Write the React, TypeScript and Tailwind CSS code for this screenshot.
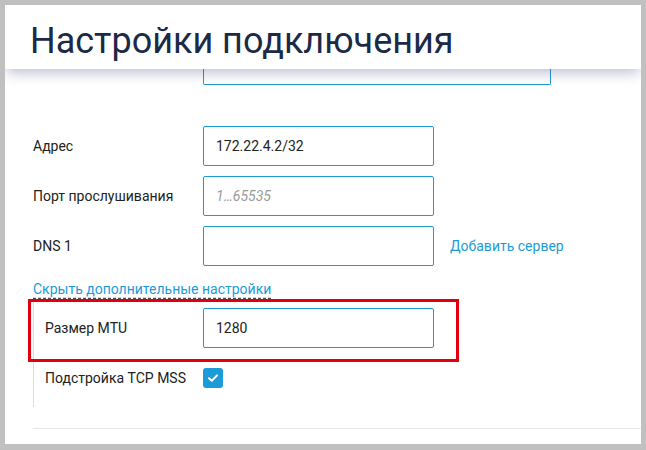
import type { ReactNode } from "react";

function Field({
  value,
  placeholder,
}: {
  value?: string;
  placeholder?: string;
}) {
  return (
    <div className="w-[231px] h-[40px] border border-[#1e9bcf] rounded-[2px] flex items-center pl-[12px] text-[14px]">
      {value ? (
        <span className="text-[#222222]">{value}</span>
      ) : (
        <span className="italic text-[#9a9a9a]">{placeholder}</span>
      )}
    </div>
  );
}

function Row({
  label,
  labelWidth,
  children,
}: {
  label: string;
  labelWidth: string;
  children: ReactNode;
}) {
  return (
    <div className="h-[40px] flex items-center">
      <div className={`${labelWidth} text-[14px] text-[#222222]`}>{label}</div>
      {children}
    </div>
  );
}

function CheckBox() {
  return (
    <div className="w-[20px] h-[20px] rounded-[3px] bg-[#1b9bd8] flex items-center justify-center">
      <svg width="14" height="14" viewBox="0 0 14 14" fill="none">
        <polyline
          points="3,7.2 5.8,9.8 11,4.4"
          stroke="white"
          strokeWidth="2"
          strokeLinecap="round"
          strokeLinejoin="round"
        />
      </svg>
    </div>
  );
}

export default function App() {
  return (
    <div className="w-[646px] h-[450px] bg-[#c0c0c0] pt-[5px] pl-[5px] pr-[5px] pb-[6px] font-['Roboto',sans-serif]">
      <div className="h-full bg-white flex flex-col overflow-hidden">
        <header className="relative z-10 h-[64px] shrink-0 bg-white pl-[25px] pt-[18px] shadow-[0_6px_12px_-2px_rgba(50,60,120,0.32)]">
          <h1 className="text-[36px] leading-none text-[#1b2a47]">
            Настройки подключения
          </h1>
        </header>

        <div className="flex-1 pl-[28px]">
          <div className="ml-[170px] w-[348px] h-[16px] border border-t-0 border-[#1e9bcf] rounded-b-[2px]" />

          <div className="mt-[41px] flex flex-col gap-[10px]">
            <Row label="Адрес" labelWidth="w-[170px]">
              <Field value="172.22.4.2/32" />
            </Row>
            <Row label="Порт прослушивания" labelWidth="w-[170px]">
              <Field placeholder="1…65535" />
            </Row>
            <Row label="DNS 1" labelWidth="w-[170px]">
              <Field />
              <a className="ml-[16px] text-[14px] text-[#1b9bd8]">
                Добавить сервер
              </a>
            </Row>
          </div>

          <div className="mt-[13px] h-[20px] leading-[20px] text-[14px]">
            <a className="text-[#1b9bd8] underline decoration-dashed decoration-[#4a4a4a] underline-offset-[4px]">
              Скрыть дополнительные настройки
            </a>
          </div>

          <div className="relative border-l border-[#dcdcdc] pl-[11px] pt-[9px] pb-[9px] flex flex-col gap-[10px]">
            <Row label="Размер MTU" labelWidth="w-[158px]">
              <Field value="1280" />
            </Row>
            <Row label="Подстройка TCP MSS" labelWidth="w-[158px]">
              <CheckBox />
            </Row>
            <div className="absolute left-[-6px] top-0 w-[431px] h-[63px] border-[3px] border-[#e2000f] pointer-events-none" />
          </div>

          <div className="mt-[21px] border-t border-[#e6e6e6]" />
        </div>
      </div>
    </div>
  );
}
